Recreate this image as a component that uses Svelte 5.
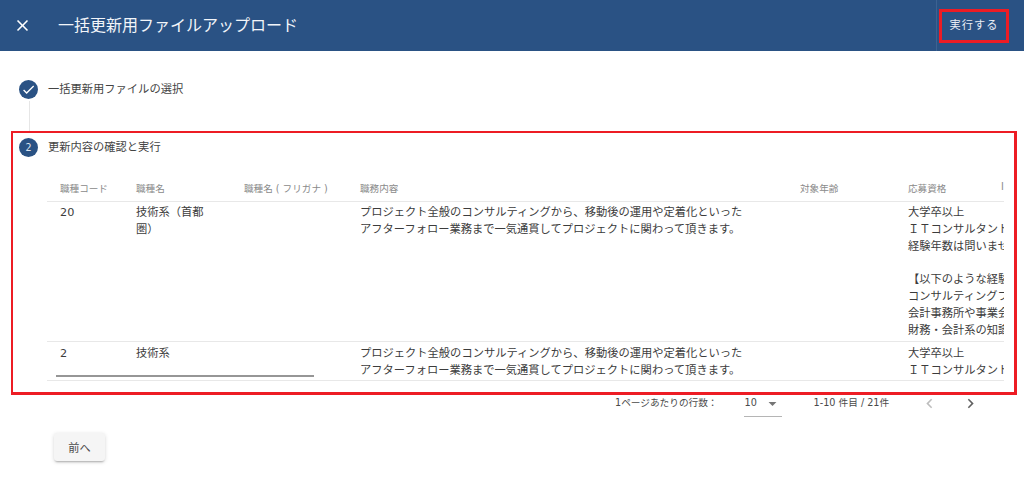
<script>
  const desc = "プロジェクト全般のコンサルティングから、移動後の運用や定着化といった\nアフターフォロー業務まで一気通貫してプロジェクトに関わって頂きます。";
  const rows = [
    {
      code: "20",
      name: "技術系（首都\n圏）",
      qual: "大学卒以上\nＩＴコンサルタントとしての\n経験年数は問いません\n\n【以下のような経験をお持ちの方】\nコンサルティングファーム出身者\n会計事務所や事業会社の経理経験者\n財務・会計系の知識をお持ちの方"
    },
    { code: "2", name: "技術系", qual: "大学卒以上\nＩＴコンサルタントとしての" }
  ];
  const columns = ["職種コード", "職種名", "職種名 ( フリガナ )", "職務内容", "対象年齢", "応募資格", "ID"];
</script>

<div class="page">
  <header class="toolbar">
    <button class="close" aria-label="閉じる">
      <svg viewBox="0 0 24 24" width="19" height="19"><path d="M19 6.41 17.59 5 12 10.59 6.41 5 5 6.41 10.59 12 5 17.59 6.41 19 12 13.41 17.59 19 19 17.59 13.41 12z" fill="#fff" /></svg>
    </button>
    <h1>一括更新用ファイルアップロード</h1>
    <div class="actions">
      <button class="run">実行する</button>
    </div>
  </header>

  <div class="step done">
    <span class="dot">
      <svg viewBox="0 0 24 24" width="15" height="15"><path d="M9 16.17 4.83 12l-1.42 1.41L9 19 21 7l-1.41-1.41z" fill="#fff" /></svg>
    </span>
    <span class="label">一括更新用ファイルの選択</span>
  </div>
  <div class="connector"></div>

  <section class="current">
    <div class="step">
      <span class="dot">2</span>
      <span class="label">更新内容の確認と実行</span>
    </div>
    <div class="table-wrap">
      <table>
        <colgroup>
          <col style="width: 76px" />
          <col style="width: 108px" />
          <col style="width: 116px" />
          <col style="width: 440px" />
          <col style="width: 108px" />
          <col style="width: 93px" />
          <col style="width: 60px" />
        </colgroup>
        <thead>
          <tr>
            {#each columns as col}
              <th>{col}</th>
            {/each}
          </tr>
        </thead>
        <tbody>
          {#each rows as row}
            <tr>
              <td>{row.code}</td>
              <td>{row.name}</td>
              <td></td>
              <td>{desc}</td>
              <td></td>
              <td>{row.qual}</td>
              <td></td>
            </tr>
          {/each}
        </tbody>
      </table>
      <div class="scrollbar"></div>
    </div>
  </section>

  <div class="pagination">
    <span class="per-page">1ページあたりの行数：</span>
    <div class="select">
      <span>10</span>
      <svg viewBox="0 0 24 24" width="19" height="19"><path d="M7 10l5 5 5-5z" fill="#757575" /></svg>
    </div>
    <span class="range">1-10 件目 / 21件</span>
    <button class="page-btn" aria-label="前へ">
      <svg viewBox="0 0 24 24" width="19" height="19"><path d="M15.41 7.41 14 6l-6 6 6 6 1.41-1.41L10.83 12z" fill="#bdbdbd" /></svg>
    </button>
    <button class="page-btn" aria-label="次へ">
      <svg viewBox="0 0 24 24" width="19" height="19"><path d="M10 6 8.59 7.41 13.17 12l-4.58 4.59L10 18l6-6z" fill="#616161" /></svg>
    </button>
  </div>

  <button class="back">前へ</button>
</div>

<style>
  :global(body) {
    margin: 0;
    background: #fff;
  }

  .page {
    font-family: "DejaVu Sans", "Noto Sans CJK JP", sans-serif;
    font-size: 11.27px;
    color: rgba(0, 0, 0, 0.87);
    height: 486px;
    overflow: hidden;
  }

  button {
    font: inherit;
    border: none;
    background: none;
    padding: 0;
    cursor: pointer;
  }

  .toolbar {
    display: flex;
    align-items: center;
    height: 51px;
    background: #2a5284;
    color: #fff;
  }

  .close {
    display: flex;
    margin-left: 13px;
    width: 19px;
    height: 19px;
  }

  h1 {
    margin: 0 0 0 26px;
    padding-bottom: 3px;
    font-size: 16px;
    font-weight: 400;
    flex: 1;
    color: #f2f5f9;
  }

  .actions {
    display: flex;
    align-items: center;
    height: 51px;
    padding: 0 15px 0 2px;
    border-left: 1px solid #3c6292;
  }

  .run {
    width: 70px;
    height: 34px;
    padding-bottom: 3px;
    border: 3px solid #ed1c24;
    color: #e8edf4;
    font-size: 11.2px;
    letter-spacing: 1px;
  }

  .step {
    display: flex;
    align-items: center;
    gap: 10px;
    height: 19px;
  }

  .step.done {
    margin: 29px 0 0 19px;
  }

  .dot {
    display: flex;
    align-items: center;
    justify-content: center;
    width: 19px;
    height: 19px;
    border-radius: 50%;
    background: #2a5284;
    color: #dfe6f0;
    font-size: 9.6px;
  }

  .label {
    padding-bottom: 4px;
    color: #444;
  }

  .connector {
    width: 1px;
    height: 30px;
    margin: 2px 0 0 29px;
    background: #e6e6e6;
  }

  .current {
    box-sizing: border-box;
    height: 264px;
    margin: 0 7px 0 11px;
    border: 3px solid #ed1c24;
    border-left-width: 2px;
    border-top-width: 2px;
    padding: 5px 10px 0 34px;
  }

  .current .step {
    margin-left: -28px;
    gap: 10px;
  }

  .table-wrap {
    position: relative;
    margin-top: 19px;
    overflow: hidden;
  }

  table {
    border-collapse: collapse;
    table-layout: fixed;
    width: 1001px;
  }

  th {
    height: 25px;
    box-sizing: border-box;
    padding: 5px 0 0 13px;
    font-size: 9.6px;
    font-weight: 400;
    text-align: left;
    vertical-align: top;
    color: #8a8a8a;
    white-space: nowrap;
    border-bottom: 1px solid #e8e8e8;
  }

  td {
    padding: 3.5px 0 0 13px;
    line-height: 16.8px;
    vertical-align: top;
    white-space: pre-wrap;
    color: #3c3c3c;
    border-bottom: 1px solid #e8e8e8;
  }

  tbody tr:first-child td {
    padding-bottom: 2.1px;
  }

  td:nth-child(4),
  td:nth-child(6) {
    white-space: pre;
  }

  .scrollbar {
    position: absolute;
    left: 9px;
    top: 199px;
    width: 258px;
    height: 2px;
    background: #969696;
  }

  .pagination {
    display: flex;
    align-items: flex-start;
    box-sizing: border-box;
    height: 23px;
    padding-top: 1px;
    font-size: 9.66px;
    line-height: 14px;
    color: #4a4a4a;
  }

  .per-page {
    margin-left: 615px;
  }

  .select {
    display: flex;
    align-items: flex-start;
    box-sizing: border-box;
    width: 38px;
    height: 21px;
    margin: 0 32px 0 26px;
    padding: 0 0 0 1px;
    border-bottom: 1px solid #b5b5b5;
    justify-content: space-between;
  }

  .select svg {
    margin-top: -2px;
  }

  .range {
    width: 106px;
  }

  .page-btn {
    display: flex;
    width: 19px;
    height: 19px;
    margin: -2px 22px 0 0;
  }

  .back {
    display: block;
    width: 51px;
    height: 28px;
    margin: 15px 0 0 54px;
    border-radius: 3px;
    background: #f5f5f5;
    color: #4a4a4a;
    font-size: 11.2px;
    box-shadow: 0 2px 2px -1px rgba(0, 0, 0, 0.25), 0 1px 4px rgba(0, 0, 0, 0.14);
  }
</style>
